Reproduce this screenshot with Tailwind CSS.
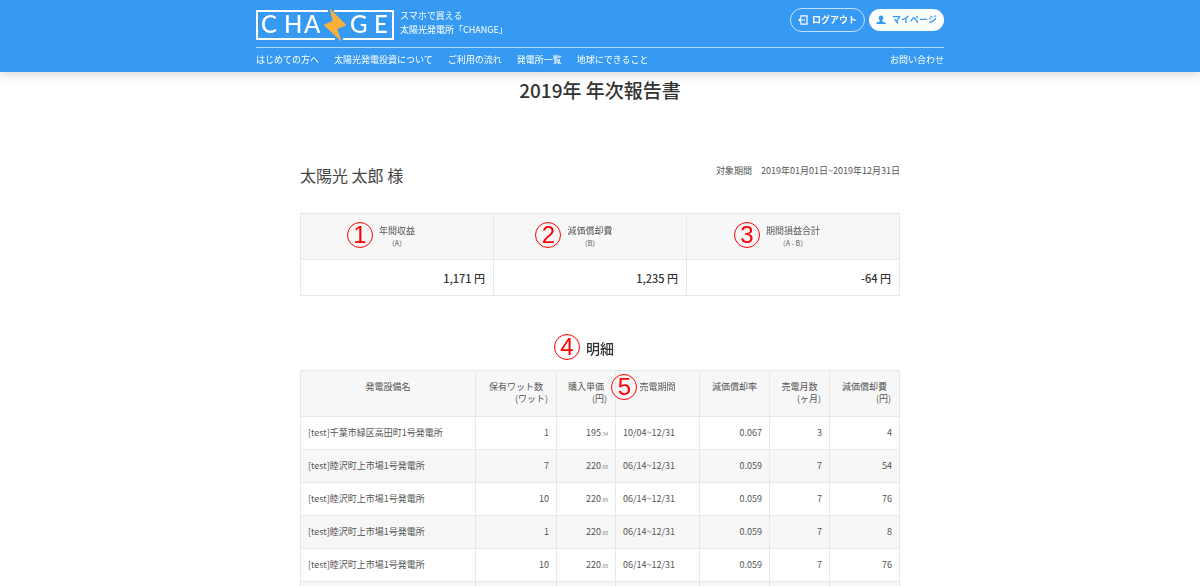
<!DOCTYPE html>
<html lang="ja">
<head>
    <meta charset="UTF-8">
    <meta name="viewport" content="width=device-width, initial-scale=1.0">
    <title>2019年 年次報告書 | CHANGE</title>
    <script src="https://cdn.jsdelivr.net/npm/@tailwindcss/browser@4"></script>
</head>
<body class="h-screen overflow-hidden bg-white font-['Noto_Sans_CJK_JP',sans-serif] text-[9px] leading-3 text-[#555]">
    <!-- Header -->
    <header class="sticky top-0 bg-[#369af3] text-white shadow-[0_2px_10px_rgba(0,0,0,0.18)]">
        <div class="mx-auto max-w-[688px] pt-2">
            <div class="flex items-start justify-between border-b border-white/60 pb-1.5">
                <a href="#" class="flex items-start gap-1.5" aria-label="CHANGE">
                    <svg class="h-[33px] w-[138px]" viewBox="0 0 138 33" fill="none">
                        <path d="M72 3H1v28h78M87 31h50V3H78" stroke="#fff" stroke-width="2"/>
                        <g fill="#fff" font-family="Lato, sans-serif" font-size="24" font-weight="500">
                            <text x="5" y="25">C</text>
                            <text x="28" y="25">H</text>
                            <text x="48" y="25">A</text>
                            <text x="94" y="25">G</text>
                            <text x="118" y="25">E</text>
                        </g>
                        <path d="M74 1L90 17 81 21 85 33 68 17 77 13z" fill="#fbb03b" stroke="#fbb03b" stroke-width=".5" stroke-linejoin="round"/>
                    </svg>
                    <span class="mt-px leading-[14px]">スマホで買える<br>太陽光発電所「CHANGE」</span>
                </a>
                <div class="flex items-center gap-1 font-bold">
                    <button type="button" class="flex h-6 w-[75px] items-center justify-center gap-1 rounded-full border border-white/70">
                        <svg class="size-2.5" viewBox="0 0 10 10" fill="none" stroke="#fff" stroke-width="1.2">
                            <path d="M3 2.800V.8h6v8.400H3v-2M7 5H1M3 3L1 5l2 2"/>
                        </svg>
                        ログアウト
                    </button>
                    <button type="button" class="flex h-[22px] w-[75px] items-center justify-center gap-1.5 rounded-full bg-white text-[#369af3]">
                        <svg class="size-2.5" viewBox="0 0 10 10" fill="#369af3">
                            <path d="M5 .5c1.500 0 2.300 1 2.300 2.300S6.500 5 6.200 5.400v1l3 1c.4.200.5.600.5 1.600H.3c0-1 .1-1.400.5-1.600l3-1v-1C3.500 5 2.700 4.100 2.700 2.800S3.500.5 5 .5z"/>
                        </svg>
                        マイページ
                    </button>
                </div>
            </div>
            <nav class="flex justify-between pt-1.5 pb-1.5">
                <div class="flex gap-[15px]">
                    <a href="#">はじめての方へ</a>
                    <a href="#">太陽光発電投資について</a>
                    <a href="#">ご利用の流れ</a>
                    <a href="#">発電所一覧</a>
                    <a href="#">地球にできること</a>
                </div>
                <a href="#">お問い合わせ</a>
            </nav>
        </div>
    </header>

    <main class="mx-auto max-w-[600px]">
        <h1 class="pt-1.5 text-center text-[19px] leading-6 font-medium text-[#333]">2019年 年次報告書</h1>

        <div class="mt-[63px] flex items-start justify-between">
            <p class="text-base leading-5 text-[#444]">太陽光 太郎 様</p>
            <p>対象期間　2019年01月01日~2019年12月31日</p>
        </div>

        <!-- Summary -->
        <table class="mt-7 w-full table-fixed border-collapse">
            <thead class="bg-[#f7f7f7]">
                <tr class="h-[46px]">
                    <th class="w-[193px] border border-[#e8e8e8] font-normal">
                        <span class="relative">年間収益<span class="absolute -top-0.5 right-full mr-1.5 flex size-[26px] items-center justify-center rounded-full border border-[#f00] font-['Liberation_Sans',sans-serif] text-2xl text-[#f00]">1</span></span>
                        <span class="block text-[7px]">（A）</span>
                    </th>
                    <th class="w-[193px] border border-[#e8e8e8] font-normal">
                        <span class="relative">減価償却費<span class="absolute -top-0.5 right-full mr-1.5 flex size-[26px] items-center justify-center rounded-full border border-[#f00] font-['Liberation_Sans',sans-serif] text-2xl text-[#f00]">2</span></span>
                        <span class="block text-[7px]">（B）</span>
                    </th>
                    <th class="border border-[#e8e8e8] font-normal">
                        <span class="relative">期間損益合計<span class="absolute -top-0.5 right-full mr-1.5 flex size-[26px] items-center justify-center rounded-full border border-[#f00] font-['Liberation_Sans',sans-serif] text-2xl text-[#f00]">3</span></span>
                        <span class="block text-[7px]">（A - B）</span>
                    </th>
                </tr>
            </thead>
            <tbody class="text-right text-[11px] font-medium text-[#333]">
                <tr class="h-9">
                    <td class="border border-[#e8e8e8] px-2">1,171 円</td>
                    <td class="border border-[#e8e8e8] px-2">1,235 円</td>
                    <td class="border border-[#e8e8e8] px-2">-64 円</td>
                </tr>
            </tbody>
        </table>

        <!-- Details -->
        <h2 class="mt-10 text-center text-sm leading-6 font-medium text-[#333]">
            <span class="relative">明細<span class="absolute -top-1 right-full mr-1.5 flex size-[26px] items-center justify-center rounded-full border border-[#f00] font-['Liberation_Sans',sans-serif] text-2xl font-normal text-[#f00]">4</span></span>
        </h2>
        <table class="mt-2.5 w-full table-fixed border-collapse">
            <thead class="bg-[#f7f7f7]">
                <tr class="h-[46px] align-top">
                    <th class="w-[175px] border border-[#e8e8e8] px-2 pt-2.5 font-normal">発電設備名</th>
                    <th class="w-[81px] border border-[#e8e8e8] px-2 pt-2.5 font-normal">保有ワット数<span class="block text-right">(ワット)</span></th>
                    <th class="w-[59px] border border-[#e8e8e8] px-2 pt-2.5 font-normal">購入単価<span class="block text-right">(円)</span></th>
                    <th class="w-[84px] border border-[#e8e8e8] px-2 pt-2.5 font-normal">
                        <span class="relative">売電期間<span class="absolute -top-1.5 right-full mr-0.5 flex size-[26px] items-center justify-center rounded-full border border-[#f00] font-['Liberation_Sans',sans-serif] text-2xl text-[#f00]">5</span></span>
                    </th>
                    <th class="w-[70px] border border-[#e8e8e8] px-2 pt-2.5 font-normal">減価償却率</th>
                    <th class="w-[60px] border border-[#e8e8e8] px-2 pt-2.5 font-normal">売電月数<span class="block text-right">(ヶ月)</span></th>
                    <th class="border border-[#e8e8e8] px-2 pt-2.5 font-normal">減価償却費<span class="block text-right">(円)</span></th>
                </tr>
            </thead>
            <tbody id="detail-rows"></tbody>
        </table>
    </main>

    <script>
        const rows = [
            ['[test]千葉市緑区高田町1号発電所', 1, '195', '.34', '10/04~12/31', '0.067', 3, 4],
            ['[test]睦沢町上市場1号発電所', 7, '220', '.00', '06/14~12/31', '0.059', 7, 54],
            ['[test]睦沢町上市場1号発電所', 10, '220', '.00', '06/14~12/31', '0.059', 7, 76],
            ['[test]睦沢町上市場1号発電所', 1, '220', '.00', '06/14~12/31', '0.059', 7, 8],
            ['[test]睦沢町上市場1号発電所', 10, '220', '.00', '06/14~12/31', '0.059', 7, 76],
            ['', '', '', '', '', '', '', ''],
        ];

        const cell = 'border border-[#e8e8e8] px-[7px]';

        // Render detail rows
        document.getElementById('detail-rows').innerHTML = rows.map(([name, watt, price, sen, period, rate, months, cost]) => `
            <tr class="h-[33px] text-right even:bg-[#f7f7f7]">
                <td class="${cell} text-left">${name}</td>
                <td class="${cell}">${watt}</td>
                <td class="${cell}">${price}<span class="text-[5px] text-[#888]">${sen}</span></td>
                <td class="${cell} text-left">${period}</td>
                <td class="${cell}">${rate}</td>
                <td class="${cell}">${months}</td>
                <td class="${cell}">${cost}</td>
            </tr>`).join('');
    </script>
</body>
</html>
